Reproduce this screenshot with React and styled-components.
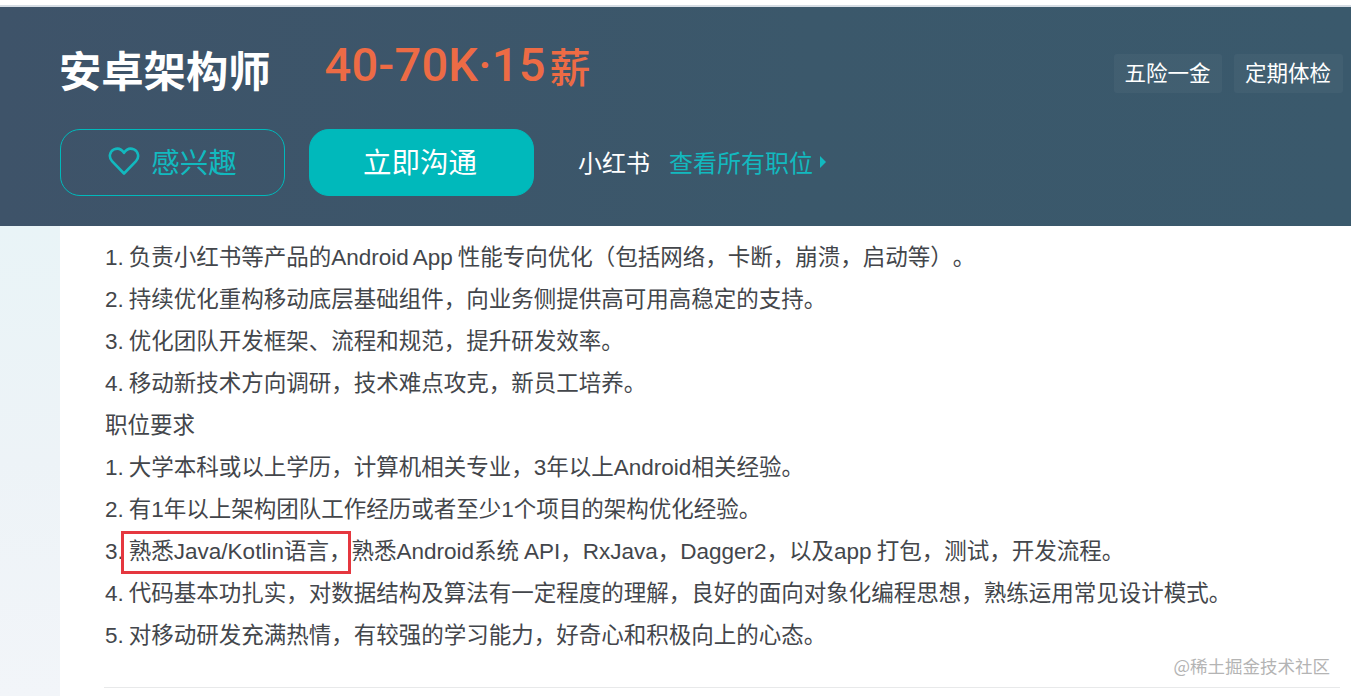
import React from "react";
import styled, { createGlobalStyle } from "styled-components";

const CJK = `"Noto Sans CJK SC", "Noto Sans", sans-serif`;

const Global = createGlobalStyle`
  html, body { margin: 0; padding: 0; background: #fff; }
  body { width: 1351px; height: 696px; overflow: hidden; font-family: "Liberation Sans", ${CJK}; text-spacing-trim: space-all; }
`;

const Page = styled.div`
  position: relative;
  width: 1351px;
  height: 696px;
  display: flex;
  flex-direction: column;
  overflow: hidden;
`;

const TopStrip = styled.div`
  height: 7px;
  flex: none;
  background: #fff;
  box-sizing: border-box;
  border-bottom: 2px solid #d6dde4;
`;

const Header = styled.header`
  height: 219px;
  flex: none;
  box-sizing: border-box;
  padding: 38px 8px 0 60px;
  background: linear-gradient(90deg, #3e5369 0%, #3b586b 60%, #3a596c 100%);
  display: flex;
  flex-direction: column;
`;

const TitleRow = styled.div`
  height: 52px;
  display: flex;
  align-items: center;
`;

const Title = styled.h1`
  margin: 0 0 0 -1px;
  font: 700 42.3px/52px ${CJK};
  color: #fff;
  position: relative;
  top: -2px;
`;

const Salary = styled.div`
  margin-left: 54px;
  display: flex;
  align-items: center;
  font: 500 47px/52px Roboto, ${CJK};
  letter-spacing: 0.2px;
  color: #ed6b45;
  position: relative;
  top: -6px;
`;

const SalaryUnit = styled.span`
  margin-left: 4px;
  font-family: ${CJK};
  font-size: 41px;
  font-weight: 500;
  letter-spacing: 0;
`;

const Tags = styled.div`
  margin-left: auto;
  display: flex;
  gap: 12px;
  position: relative;
  top: 2px;
`;

const Tag = styled.span`
  height: 39px;
  width: ${(p) => p.$w}px;
  box-sizing: border-box;
  padding: 0 1px 4px 0;
  display: flex;
  align-items: center;
  justify-content: center;
  border-radius: 3px;
  background: rgba(255, 255, 255, 0.04);
  color: #fff;
  font: 400 21.5px/35px ${CJK};
`;

const ActionRow = styled.div`
  margin-top: 32px;
  display: flex;
  align-items: center;
`;

const Button = styled.button`
  width: 225px;
  height: 67px;
  box-sizing: border-box;
  border-radius: 20px;
  display: flex;
  align-items: center;
  justify-content: center;
  gap: 11px;
  padding: 0 ${(p) => (p.$primary ? 3 : 0)}px 3px 0;
  font: 400 28.5px/64px ${CJK};
  border: 1px solid #00b9bb;
  color: ${(p) => (p.$primary ? "#fff" : "#12b9bf")};
  background: ${(p) => (p.$primary ? "#00b9bb" : "transparent")};
  margin-right: 24px;
`;

const Company = styled.span`
  margin-left: 20px;
  padding-bottom: 2px;
  font: 400 24px/34px ${CJK};
  color: #fff;
`;

const AllJobs = styled.a`
  margin-left: 19px;
  padding-bottom: 2px;
  display: flex;
  align-items: center;
  gap: 7px;
  font: 400 24px/34px ${CJK};
  color: #12b9bf;
`;

const Caret = styled.span`
  width: 0;
  height: 0;
  border-left: 6px solid #12b9bf;
  border-top: 6px solid transparent;
  border-bottom: 6px solid transparent;
`;

const Body = styled.main`
  flex: 1;
  display: flex;
  min-height: 0;
`;

const Rail = styled.aside`
  width: 60px;
  flex: none;
  background: linear-gradient(180deg, #e9f4f7 0%, #edf3f7 50%, #f2f5f9 100%);
`;

const Content = styled.section`
  flex: 1;
  background: #fff;
  padding: 11px 11px 0 44px;
`;

const Line = styled.p`
  margin: 0 0 0 1px;
  height: 42px;
  font: 400 22.5px/42px "Liberation Sans", ${CJK};
  word-spacing: -1.2px;
  color: #43464b;
  white-space: nowrap;
`;

const Marked = styled.span`
  position: relative;
  &::after {
    content: "";
    position: absolute;
    left: -8px;
    right: 0;
    top: -8px;
    bottom: -10px;
    border: 3px solid #e5373f;
  }
`;

const Divider = styled.div`
  height: 1px;
  margin-top: 30px;
  background: #e8e9ea;
`;

const Watermark = styled.div`
  position: absolute;
  right: 21px;
  top: 654px;
  font: 400 17.5px/24px ${CJK};
  color: #b4b4b4;
`;

const Heart = () => (
  <svg width="32" height="30" viewBox="0 0 32 30" fill="none" stroke="#12b9bf" strokeWidth="2.6" strokeLinejoin="round">
    <path d="M16 27.5 4 15.2C0.4 11.4 1.6 5.4 6 3.4c3.8-1.7 7.6-.2 10 3.4 2.4-3.6 6.2-5.1 10-3.4 4.4 2 5.6 8 2 11.8L16 27.5Z" />
  </svg>
);

const lines = [
  "1. 负责小红书等产品的Android App 性能专向优化（包括网络，卡断，崩溃，启动等）。",
  "2. 持续优化重构移动底层基础组件，向业务侧提供高可用高稳定的支持。",
  "3. 优化团队开发框架、流程和规范，提升研发效率。",
  "4. 移动新技术方向调研，技术难点攻克，新员工培养。",
  "职位要求",
  "1. 大学本科或以上学历，计算机相关专业，3年以上Android相关经验。",
  "2. 有1年以上架构团队工作经历或者至少1个项目的架构优化经验。",
];

export default function App() {
  return (
    <Page>
      <Global />
      <TopStrip />
      <Header>
        <TitleRow>
          <Title>安卓架构师</Title>
          <Salary>
            40-70K·15<SalaryUnit>薪</SalaryUnit>
          </Salary>
          <Tags>
            <Tag $w={108}>五险一金</Tag>
            <Tag $w={109}>定期体检</Tag>
          </Tags>
        </TitleRow>
        <ActionRow>
          <Button>
            <Heart />
            感兴趣
          </Button>
          <Button $primary>立即沟通</Button>
          <Company>小红书</Company>
          <AllJobs>
            查看所有职位
            <Caret />
          </AllJobs>
        </ActionRow>
      </Header>
      <Body>
        <Rail />
        <Content>
          {lines.map((t) => (
            <Line key={t}>{t}</Line>
          ))}
          <Line>
            3. <Marked>熟悉Java/Kotlin语言，</Marked>熟悉Android系统 API，RxJava，Dagger2，以及app 打包，测试，开发流程。
          </Line>
          <Line>4. 代码基本功扎实，对数据结构及算法有一定程度的理解，良好的面向对象化编程思想，熟练运用常见设计模式。</Line>
          <Line>5. 对移动研发充满热情，有较强的学习能力，好奇心和积极向上的心态。</Line>
          <Divider />
        </Content>
      </Body>
      <Watermark>@稀土掘金技术社区</Watermark>
    </Page>
  );
}
